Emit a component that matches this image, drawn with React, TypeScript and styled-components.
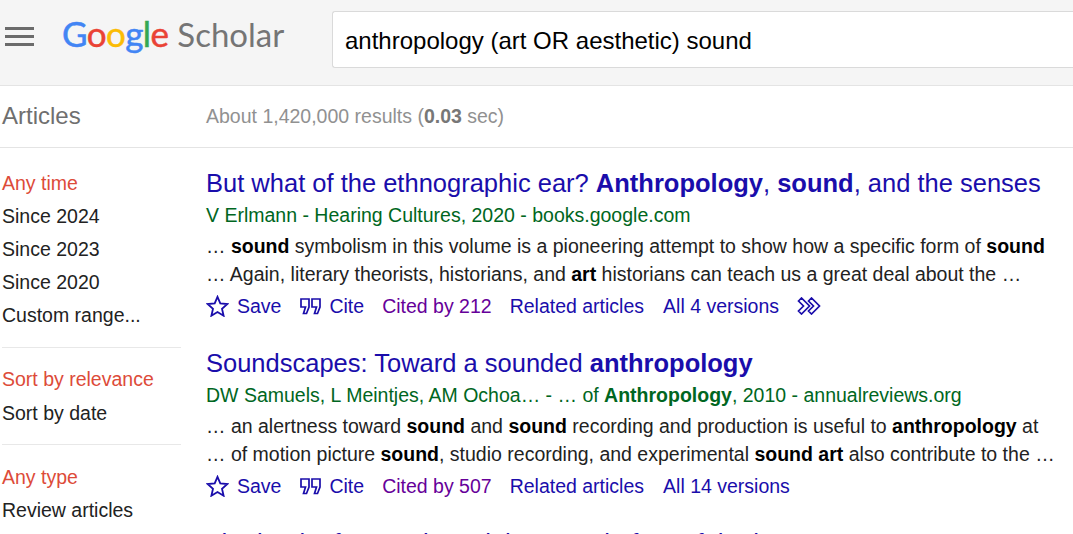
import React from "react";
import styled, { createGlobalStyle } from "styled-components";

const GlobalStyle = createGlobalStyle`
  html, body {
    margin: 0;
    padding: 0;
    height: 534px;
    overflow: hidden;
    background: #fff;
    font-family: "Liberation Sans", Arial, sans-serif;
  }
`;

const Header = styled.header`
  height: 85px;
  background: #f5f5f5;
  border-bottom: 1px solid #e4e4e4;
  display: flex;
  align-items: flex-start;
  overflow: hidden;
`;

const MenuIcon = styled.div`
  width: 29px;
  height: 19px;
  margin: 27px 0 0 5px;
  display: flex;
  flex-direction: column;
  justify-content: space-between;
  span {
    height: 3px;
    background: #6b6b6b;
  }
`;

const Logo = styled.div`
  width: 270px;
  margin: 12px 0 0 28px;
  display: flex;
  align-items: baseline;
  font-family: Lato, "Open Sans", sans-serif;
  line-height: 42px;
  white-space: nowrap;
`;

const GoogleWord = styled.span`
  font-size: 35px;
  font-weight: 400;
  letter-spacing: -0.6px;
  -webkit-text-stroke: 0.5px currentColor;
`;

const Goo = styled.span<{ $c: string }>`
  color: ${(p) => p.$c};
`;

const ScholarWord = styled.span`
  color: #757575;
  font-size: 33px;
  margin-left: 9px;
`;

const Search = styled.div`
  margin: 11px 0 0 0;
  flex: 1;
  height: 55px;
  background: #fff;
  border: 1px solid #dadada;
  border-right: none;
  border-radius: 3px 0 0 3px;
  padding-left: 12px;
  font-size: 24px;
  line-height: 57px;
  color: #000;
  white-space: nowrap;
`;

const SubBar = styled.div`
  height: 61px;
  border-bottom: 1px solid #e4e4e4;
  display: flex;
  align-items: center;
`;

const SectionName = styled.div`
  width: 206px;
  padding: 0 0 2px 2px;
  box-sizing: border-box;
  font-size: 24px;
  color: #6f6f6f;
`;

const ResultCount = styled.div`
  font-size: 19.5px;
  color: #919191;
  b {
    color: #777;
  }
`;

const Body = styled.div`
  display: flex;
  height: 387px;
  overflow: hidden;
`;

const Sidebar = styled.aside`
  width: 206px;
  flex: none;
  padding: 19px 0 0 2px;
  box-sizing: border-box;
`;

const SideItem = styled.div<{ $active?: boolean }>`
  height: 33px;
  line-height: 33px;
  font-size: 19.5px;
  color: ${(p) => (p.$active ? "#dd4b39" : "#222")};
  white-space: nowrap;
`;

const SideGroup = styled.div`
  width: 179px;
  padding-bottom: 15px;
  margin-bottom: 16px;
  border-bottom: 1px solid #e8e8e8;
  &:first-child {
    margin-bottom: 15px;
  }
  &:last-child {
    border-bottom: none;
  }
`;

const SortGroup = styled(SideGroup)`
  padding-bottom: 14px;
  ${SideItem} + ${SideItem} {
    margin-top: 1px;
  }
`;

const Results = styled.main`
  flex: 1;
  min-width: 0;
  padding-top: 19px;
`;

const Result = styled.article`
  margin-bottom: 26px;
`;

const Title = styled.div`
  font-size: 25.5px;
  line-height: 33px;
  color: #1a0dab;
  white-space: nowrap;
`;

const Byline = styled.div`
  font-size: 19.5px;
  line-height: 26px;
  margin-top: 2px;
  color: #006621;
  white-space: nowrap;
`;

const Snippet = styled.div`
  font-size: 19.5px;
  line-height: 28px;
  margin-top: 4px;
  color: #222;
  white-space: nowrap;
  b {
    color: #000;
  }
`;

const Actions = styled.div`
  display: flex;
  align-items: center;
  height: 30px;
  margin-top: 3px;
  font-size: 19.5px;
  color: #1a0dab;
  white-space: nowrap;
`;

const Action = styled.span<{ $visited?: boolean; $gap?: number }>`
  display: inline-flex;
  align-items: center;
  margin-right: ${(p) => p.$gap ?? 18}px;
  color: ${(p) => (p.$visited ? "#660099" : "#1a0dab")};
  svg {
    flex: none;
  }
`;

const StarSvg = styled.svg`
  margin-right: 8px;
`;

const QuoteSvg = styled.svg`
  margin: 0 8px 0 1px;
`;

const StarIcon = () => (
  <StarSvg width="23" height="22" viewBox="0 0 23 22">
    <path d="M11.5 1.8l2.8 6.6 7.1.6-5.4 4.7 1.6 7-6.1-3.7-6.1 3.7 1.6-7L1.600 9l7.100-.6z" fill="none" stroke="#1a0dab" strokeWidth="1.8" />
  </StarSvg>
);

const QuoteIcon = () => (
  <QuoteSvg width="21" height="17" viewBox="0 0 21 17">
    <path d="M1 1h8v8l-2.500 6.500H3.500L5.500 9H1zM12 1h8v8l-2.500 6.500h-3L16.500 9H12z" fill="none" stroke="#1a0dab" strokeWidth="1.7" />
  </QuoteSvg>
);

const MoreIcon = () => (
  <svg width="24" height="18" viewBox="0 0 24 18">
    <path d="M1.500 4L4.500 1l8 8-8 8-3-3 5-5zM11.500 4l3-3 8 8-8 8-3-3 5-5z" fill="none" stroke="#1a0dab" strokeWidth="1.7" strokeLinejoin="miter" />
  </svg>
);

const App = () => (
  <>
    <GlobalStyle />
    <Header>
      <MenuIcon>
        <span />
        <span />
        <span />
      </MenuIcon>
      <Logo>
        <GoogleWord>
          <Goo $c="#4285f4">G</Goo>
          <Goo $c="#ea4335">o</Goo>
          <Goo $c="#fbbc05">o</Goo>
          <Goo $c="#4285f4">g</Goo>
          <Goo $c="#34a853">l</Goo>
          <Goo $c="#ea4335">e</Goo>
        </GoogleWord>
        <ScholarWord>Scholar</ScholarWord>
      </Logo>
      <Search>anthropology (art OR aesthetic) sound</Search>
    </Header>
    <SubBar>
      <SectionName>Articles</SectionName>
      <ResultCount>
        About 1,420,000 results (<b>0.03</b> sec)
      </ResultCount>
    </SubBar>
    <Body>
      <Sidebar>
        <SideGroup>
          <SideItem $active>Any time</SideItem>
          <SideItem>Since 2024</SideItem>
          <SideItem>Since 2023</SideItem>
          <SideItem>Since 2020</SideItem>
          <SideItem>Custom range...</SideItem>
        </SideGroup>
        <SortGroup>
          <SideItem $active>Sort by relevance</SideItem>
          <SideItem>Sort by date</SideItem>
        </SortGroup>
        <SideGroup>
          <SideItem $active>Any type</SideItem>
          <SideItem>Review articles</SideItem>
        </SideGroup>
      </Sidebar>
      <Results>
        <Result>
          <Title>
            But what of the ethnographic ear? <b>Anthropology</b>, <b>sound</b>, and the senses
          </Title>
          <Byline>V Erlmann - Hearing Cultures, 2020 - books.google.com</Byline>
          <Snippet>
            … <b>sound</b> symbolism in this volume is a pioneering attempt to show how a specific form of <b>sound</b>
            <br />… Again, literary theorists, historians, and <b>art</b> historians can teach us a great deal about the …
          </Snippet>
          <Actions>
            <Action>
              <StarIcon />
              Save
            </Action>
            <Action>
              <QuoteIcon />
              Cite
            </Action>
            <Action $visited>Cited by 212</Action>
            <Action $gap={19}>Related articles</Action>
            <Action>All 4 versions</Action>
            <Action>
              <MoreIcon />
            </Action>
          </Actions>
        </Result>
        <Result>
          <Title>
            Soundscapes: Toward a sounded <b>anthropology</b>
          </Title>
          <Byline>
            DW Samuels, L Meintjes, AM Ochoa… - … of <b>Anthropology</b>, 2010 - annualreviews.org
          </Byline>
          <Snippet>
            … an alertness toward <b>sound</b> and <b>sound</b> recording and production is useful to <b>anthropology</b> at
            <br />… of motion picture <b>sound</b>, studio recording, and experimental <b>sound art</b> also contribute to the …
          </Snippet>
          <Actions>
            <Action>
              <StarIcon />
              Save
            </Action>
            <Action>
              <QuoteIcon />
              Cite
            </Action>
            <Action $visited>Cited by 507</Action>
            <Action $gap={19}>Related articles</Action>
            <Action>All 14 versions</Action>
          </Actions>
        </Result>
        <Title>The book of acoustic and the sound of art of the human ear</Title>
      </Results>
    </Body>
  </>
);

export default App;
